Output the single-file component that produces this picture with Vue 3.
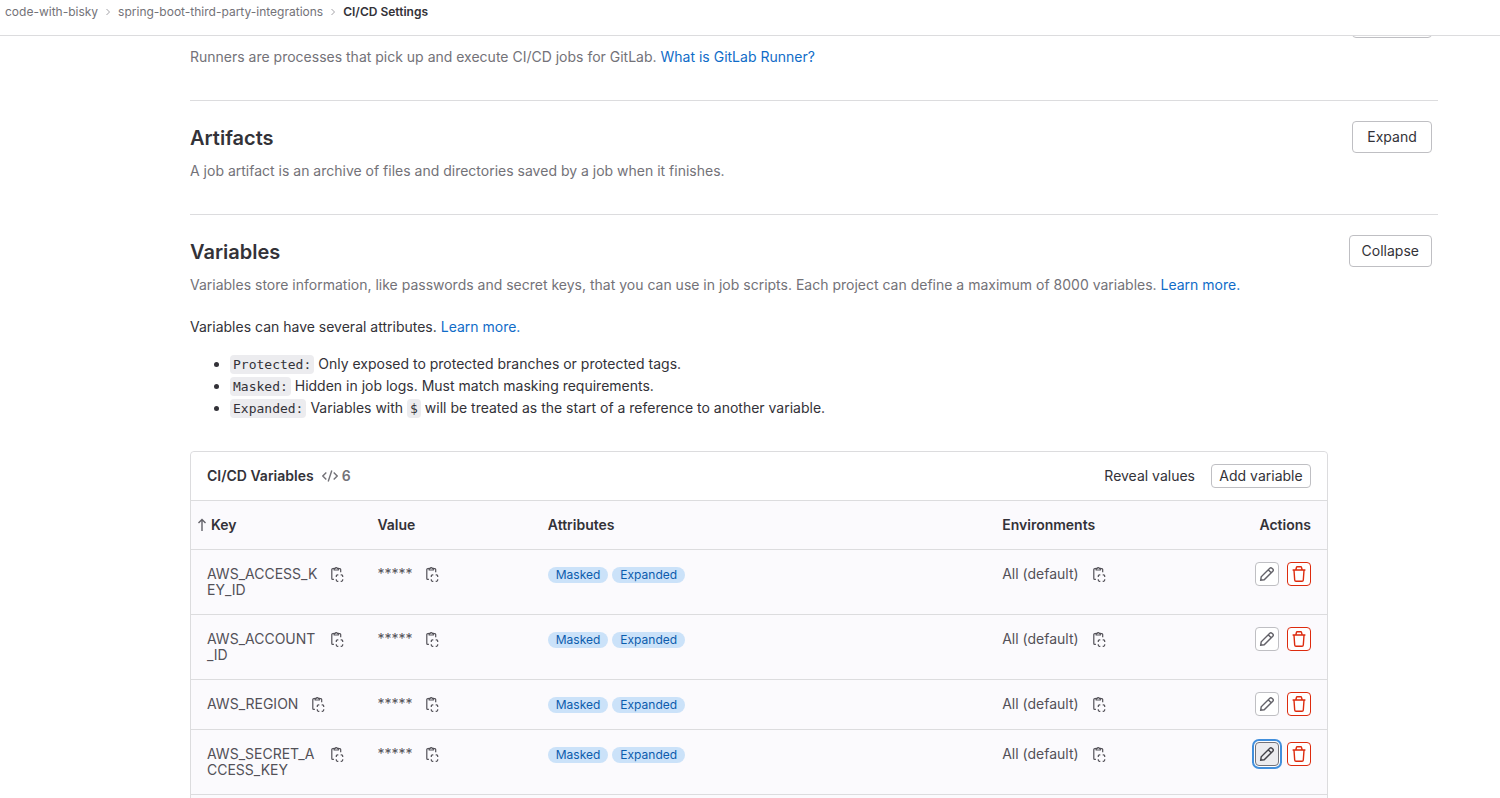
<script setup>
const variables = [
  { key: 'AWS_ACCESS_KEY_ID' },
  { key: 'AWS_ACCOUNT_ID' },
  { key: 'AWS_REGION' },
  { key: 'AWS_SECRET_ACCESS_KEY', active: true },
]
const tags = ['Masked', 'Expanded']
</script>

<template>
  <div class="page">
    <header class="topbar">
      <nav class="crumbs" aria-label="Breadcrumb">
        <a href="#">code-with-bisky</a>
        <svg class="chev" viewBox="0 0 8 8"><path d="M2.5 1l3 3-3 3" /></svg>
        <a href="#">spring-boot-third-party-integrations</a>
        <svg class="chev" viewBox="0 0 8 8"><path d="M2.5 1l3 3-3 3" /></svg>
        <a href="#" class="current">CI/CD Settings</a>
      </nav>
    </header>

    <main class="content">
      <section class="runners">
        <p class="desc">
          Runners are processes that pick up and execute CI/CD jobs for GitLab.
          <a href="#">What is GitLab Runner?</a>
        </p>
        <button class="btn toggle" aria-label="Expand"></button>
      </section>

      <section class="block">
        <div class="head">
          <h2>Artifacts</h2>
          <button class="btn expand">Expand</button>
        </div>
        <p class="desc">A job artifact is an archive of files and directories saved by a job when it finishes.</p>
      </section>

      <section class="block">
        <div class="head">
          <h2>Variables</h2>
          <button class="btn">Collapse</button>
        </div>
        <p class="desc">
          Variables store information, like passwords and secret keys, that you can use in job scripts. Each project can define a maximum of 8000 variables.
          <a href="#">Learn more.</a>
        </p>

        <p class="intro">Variables can have several attributes. <a href="#">Learn more.</a></p>
        <ul class="attrs">
          <li><code>Protected:</code> Only exposed to protected branches or protected tags.</li>
          <li><code>Masked:</code> Hidden in job logs. Must match masking requirements.</li>
          <li><code>Expanded:</code> Variables with <code>$</code> will be treated as the start of a reference to another variable.</li>
        </ul>

        <div class="card">
          <div class="card-head">
            <h3>CI/CD Variables</h3>
            <span class="count">
              <svg class="icon" viewBox="0 0 16 16"><path d="M4.3 4.5L.8 8l3.5 3.5M11.7 4.5L15.2 8l-3.5 3.5M9.8 2.5L6.2 13.5" /></svg>
              6
            </span>
            <button class="btn-plain">Reveal values</button>
            <button class="btn small">Add variable</button>
          </div>
          <table>
            <thead>
              <tr>
                <th class="c-key">
                  <div class="sortable">
                    <svg class="sort" viewBox="0 0 10 14"><path d="M5 13V1.5M1.5 5L5 1.5 8.5 5" /></svg>
                    Key
                  </div>
                </th>
                <th class="c-value">Value</th>
                <th class="c-attrs">Attributes</th>
                <th class="c-env">Environments</th>
                <th class="c-actions">Actions</th>
              </tr>
            </thead>
            <tbody>
              <tr v-for="v in variables" :key="v.key">
                <td v-for="(text, i) in [v.key, '*****']" :key="i">
                  <div class="copyable">
                    <span>{{ text }}</span>
                    <button class="copy" aria-label="Copy">
                      <svg class="icon" viewBox="0 0 16 16">
                        <path d="M5 2.7H3.7a.9.9 0 0 0-.9.9v8.8a.9.9 0 0 0 .9.9h1.2M9.3 2.7h1.5a.9.9 0 0 1 .9.9v2.6M5.2 4V2.4h1a1.1 1.1 0 0 1 2.1 0h1V4z" />
                        <path d="M7.3 11v-.9a1.2 1.2 0 0 1 1.2-1.2h.8M11.7 8.9h.8a1.2 1.2 0 0 1 1.2 1.2v.9M13.7 13.2v.9a1.2 1.2 0 0 1-1.2 1.2h-.8M9.3 15.3h-.8a1.2 1.2 0 0 1-1.2-1.2v-.9" />
                      </svg>
                    </button>
                  </div>
                </td>
                <td>
                  <div class="tags"><span v-for="t in tags" :key="t" class="tag">{{ t }}</span></div>
                </td>
                <td>
                  <div class="copyable">
                    <span>All (default)</span>
                    <button class="copy" aria-label="Copy">
                      <svg class="icon" viewBox="0 0 16 16">
                        <path d="M5 2.7H3.7a.9.9 0 0 0-.9.9v8.8a.9.9 0 0 0 .9.9h1.2M9.3 2.7h1.5a.9.9 0 0 1 .9.9v2.6M5.2 4V2.4h1a1.1 1.1 0 0 1 2.1 0h1V4z" />
                        <path d="M7.3 11v-.9a1.2 1.2 0 0 1 1.2-1.2h.8M11.7 8.9h.8a1.2 1.2 0 0 1 1.2 1.2v.9M13.7 13.2v.9a1.2 1.2 0 0 1-1.2 1.2h-.8M9.3 15.3h-.8a1.2 1.2 0 0 1-1.2-1.2v-.9" />
                      </svg>
                    </button>
                  </div>
                </td>
                <td>
                  <div class="actions">
                    <button class="act" :class="{ active: v.active }" aria-label="Edit">
                      <svg class="icon" viewBox="0 0 16 16"><path d="M1.7 14.3l.5-3.5 8.6-8.6a1.5 1.5 0 0 1 2.1 0l.9.9a1.5 1.5 0 0 1 0 2.1l-8.6 8.6zM9.2 3.8l3 3" /></svg>
                    </button>
                    <button class="act danger" aria-label="Delete">
                      <svg class="icon" viewBox="0 0 16 16"><path d="M1.6 4h12.8M4.8 3.9l.7-2.6a.8.8 0 0 1 .8-.6h3.4a.8.8 0 0 1 .8.6l.7 2.6M3 4.2l.7 9.8a1.3 1.3 0 0 0 1.3 1.2h6a1.3 1.3 0 0 0 1.3-1.2l.7-9.8" /></svg>
                    </button>
                  </div>
                </td>
              </tr>
            </tbody>
          </table>
        </div>
      </section>
    </main>
  </div>
</template>

<style>
html, body { height: 100%; overflow: hidden; background: #fff; }
</style>

<style scoped>
.page {
  font-family: Inter, "Noto Sans", sans-serif;
  font-size: 14px;
  line-height: 20px;
  color: #333238;
}
a { color: #106cc8; text-decoration: none; }
p, h2, h3, ul { margin: 0; }
button { font: inherit; color: inherit; cursor: pointer; }
.icon { width: 16px; height: 16px; fill: none; stroke: currentColor; stroke-width: 1.4; display: block; }

.topbar {
  position: relative;
  z-index: 1;
  height: 35px;
  background: #fff;
  border-bottom: 1px solid #dcdcde;
}
.crumbs { display: flex; align-items: center; gap: 6px; height: 24px; padding-left: 5px; font-size: 12px; }
.crumbs a { color: #737278; }
.crumbs .current { color: #333238; font-weight: 600; }
.chev { width: 8px; height: 8px; fill: none; stroke: #a4a3a8; stroke-width: 1; }

.content { padding: 0 62px 0 190px; }
.desc { color: #737278; }
.runners { display: flex; justify-content: space-between; align-items: flex-start; padding: 11px 6px 33px 0; }
.toggle { width: 80px; margin-top: -41px; }

.block { border-top: 1px solid #dcdcde; padding: 20px 0 33px; }
.head { display: flex; align-items: center; justify-content: space-between; padding-right: 6px; margin-bottom: 8px; }
h2 { padding-top: 2px; font-size: 20px; line-height: 28px; font-weight: 600; }
.btn {
  height: 32px;
  padding: 0 12px;
  background: #fff;
  border: 1px solid #bfbfc3;
  border-radius: 4px;
}
.expand { width: 80px; }
.small { width: 100px; height: 24px; padding: 0; line-height: 16px; }
.btn-plain { border: 0; background: none; padding: 0; margin-left: auto; margin-right: 16px; }

.intro { margin-top: 22px; }
.attrs { margin: 16px 0 32px; padding-left: 40px; line-height: 22px; }
code {
  font-family: "DejaVu Sans Mono", monospace;
  font-size: 13px;
  line-height: 16px;
  padding: 2px 3px;
  background: #ececef;
  border-radius: 4px;
}

.card { margin-right: 110px; padding-bottom: 50px; background: #fbfafd; border: 1px solid #dcdcde; border-radius: 4px; }
.card-head { display: flex; align-items: center; height: 48px; padding: 0 16px; background: #fff; border-radius: 4px 4px 0 0; }
h3 { font-size: 14px; line-height: 20px; font-weight: 600; }
.count { display: flex; align-items: center; gap: 4px; margin-left: 8px; color: #737278; font-weight: 600; }

table { width: 100%; table-layout: fixed; border-collapse: separate; border-spacing: 0; line-height: 16px; }
th { height: 50px; padding: 0 16px; text-align: left; font-weight: 600; border: solid #dcdcde; border-width: 1px 0; box-sizing: border-box; }
.c-key { width: 15%; padding-left: 6px; }
.sortable { display: flex; align-items: center; gap: 4px; }
.sort { width: 10px; height: 14px; fill: none; stroke: #626168; stroke-width: 1.4; }
.c-value { width: 15%; }
.c-attrs { width: 40%; }
.c-env { width: 20%; }
.c-actions { width: 10%; text-align: right; }
td { box-sizing: border-box; height: 50px; padding: 16px; vertical-align: top; color: #535158; border-bottom: 1px solid #dcdcde; }
.copyable { display: flex; align-items: flex-start; gap: 8px; margin-right: -4px; word-break: break-all; }
.copy { flex: none; width: 24px; height: 16px; padding: 0 4px; border: 0; background: none; }
.copy .icon { stroke-width: 1.2; }
.tags { display: flex; gap: 4px; }
.tag { margin-top: 1px; padding: 0 8px; border-radius: 8px; background: #cbe2f9; color: #0b5cad; font-size: 12px; line-height: 16px; }
.actions { display: flex; justify-content: flex-end; gap: 8px; margin: -4px 0; }
.act {
  display: flex;
  align-items: center;
  justify-content: center;
  width: 24px;
  height: 24px;
  padding: 0;
  background: #fff;
  color: #626168;
  border: 1px solid #bfbfc3;
  border-radius: 4px;
}
.danger { color: #dd2b0e; border-color: #dd2b0e; }
.active { background: #ececef; border-color: #737278; color: #434248; box-shadow: 0 0 0 1px #fff, 0 0 0 3px #428fdc; }
</style>
